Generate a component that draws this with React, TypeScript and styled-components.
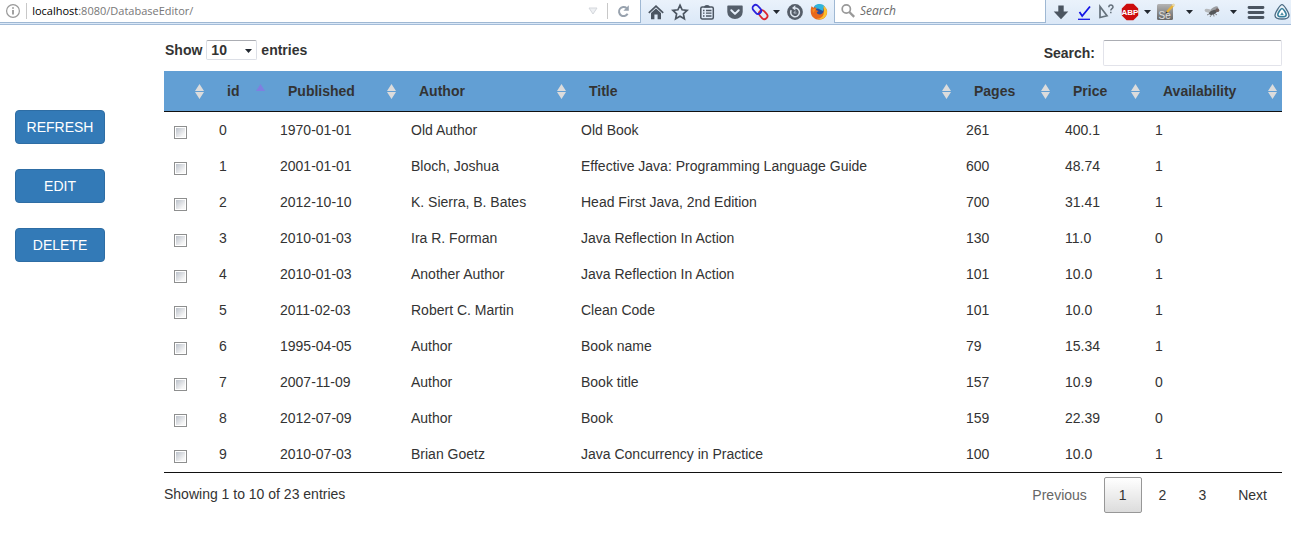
import React, { useState } from "react";
import styled, { createGlobalStyle } from "styled-components";

const GlobalStyle = createGlobalStyle`
  *, *::before, *::after { box-sizing: border-box; }
  body {
    margin: 0;
    background: #fff;
    color: #333;
    font: 14px/20px "Liberation Sans", Arial, Helvetica, sans-serif;
  }
  button, input, select { font: inherit; color: inherit; }
`;

/* ---------- browser toolbar ---------- */

const Toolbar = styled.header`
  display: flex;
  height: 25px;
  background: linear-gradient(#eaf2fb, #dbe8f7);
  border-bottom: 1px solid #a3bcd8;
  font: 12px/16px "Open Sans", "Noto Sans", sans-serif;
`;

const AddressBar = styled.div`
  flex: 1;
  display: flex;
  align-items: center;
  height: 23px;
  padding-left: 5px;
  background: #fff;
  border-right: 1px solid #9fb8d3;
  border-bottom: 1px solid #9fb8d3;
`;

const Divider = styled.span`
  width: 1px;
  height: 16px;
  background: #c8c8c8;
`;

const Url = styled.div`
  flex: 1;
  padding-left: 5px;
  font-size: 11px;
  color: #777;
  b { color: #000; font-weight: 400; }
`;

const SearchBar = styled.label`
  display: flex;
  align-items: center;
  gap: 5px;
  width: 212px;
  height: 23px;
  margin-left: 6px;
  padding-left: 6px;
  background: #fff;
  border: 1px solid #9fb8d3;
  border-top: 0;
`;

const SearchField = styled.input`
  flex: 1;
  min-width: 0;
  padding: 0;
  border: 0;
  outline: 0;
  background: none;
  &::placeholder { color: #6b6b6b; font-style: italic; opacity: 1; }
`;

const IconGroup = styled.div`
  display: flex;
  align-items: center;
  height: 23px;
  padding-left: 3px;
`;

const ToolButton = styled.button<{ $width?: number }>`
  display: flex;
  align-items: center;
  justify-content: center;
  flex: none;
  width: ${(p) => p.$width ?? 24}px;
  height: 22px;
  padding: 0;
  border: 0;
  background: none;
  color: #4b5561;
  svg { flex: none; display: block; }
`;

const Svg = ({ w = 18, children }: { w?: number; children: React.ReactNode }) => (
  <svg width={w} height="18" viewBox={`0 0 ${w} 18`} fill="none" aria-hidden="true">
    {children}
  </svg>
);

const InfoIcon = () => (
  <Svg>
    <circle cx="8" cy="9" r="6.4" stroke="#9a9a9a" strokeWidth="1.2" />
    <path d="M8 8v4.4M8 5.3v1.5" stroke="#8a8a8a" strokeWidth="1.6" />
  </Svg>
);

const DropIcon = () => (
  <Svg><path d="M5 6h8L9 12z" stroke="#d4d7dc" fill="#eef0f3" /></Svg>
);

const ReloadIcon = () => (
  <Svg>
    <path d="M12.6 11.800A4.600 4.600 0 1 1 11.600 6" stroke="#98a2ae" strokeWidth="2" />
    <path d="M13.800 3.200v5.600H8.400z" fill="#98a2ae" />
  </Svg>
);

const MagnifierIcon = () => (
  <Svg w={14}>
    <circle cx="5.3" cy="7" r="4.1" stroke="#999" strokeWidth="1.7" />
    <path d="M8.3 10l4.9 4.9" stroke="#999" strokeWidth="2.4" />
  </Svg>
);

const HomeIcon = () => (
  <Svg>
    <path d="M1.800 9.800L9 3.200l7.200 6.600" stroke="#4b5561" strokeWidth="1.700" />
    <path d="M4 10l5-4.400 5 4.400v6.200h-3.400v-4.600H7.400v4.600H4z" fill="#4b5561" />
  </Svg>
);

const StarIcon = () => (
  <Svg>
    <path d="M9 2.2l2.1 4.6 5 .6-3.7 3.4 1 5L9 13.3l-4.4 2.5 1-5-3.7-3.4 5-.6z" stroke="#4b5561" strokeWidth="1.7" />
  </Svg>
);

const ClipboardIcon = () => (
  <Svg>
    <rect x="2.800" y="4" width="12.500" height="12" rx="1.500" stroke="#4b5561" strokeWidth="1.500" />
    <path d="M6 4.500c0-3.300 6-3.300 6 0z" fill="#4b5561" />
    <path d="M5 7.500h1.500M8 7.500h5.500M5 10.200h1.500M8 10.200h5.500M5 13h1.500M8 13h5.500" stroke="#4b5561" strokeWidth="1.300" />
  </Svg>
);

const PocketIcon = () => (
  <Svg>
    <path d="M2.300 2.500h13.400c.6 0 1 .4 1 1V9a7.700 7 0 0 1-15.400 0V3.500c0-.6.4-1 1-1z" fill="#555f6b" />
    <path d="M5.300 7.300L9 10.900l3.700-3.600" stroke="#e6effa" strokeWidth="2" strokeLinecap="round" strokeLinejoin="round" />
  </Svg>
);

const LinkIcon = () => (
  <Svg>
    <rect x="7.400" y="8.600" width="9.600" height="6.200" rx="3.100" transform="rotate(48 12.200 11.700)" stroke="#dc2630" strokeWidth="1.800" />
    <rect x="1" y="3.300" width="9.800" height="6.200" rx="3.100" transform="rotate(48 5.900 6.400)" stroke="#2a22dc" strokeWidth="1.800" />
  </Svg>
);

const Caret = () => (
  <svg width="7" height="4" viewBox="0 0 7 4" aria-hidden="true"><path d="M0 0h7L3.5 4z" fill="#222830" /></svg>
);

const HistoryIcon = () => (
  <Svg>
    <circle cx="9" cy="9" r="7.900" fill="#555d68" />
    <path d="M5.200 7.200A4.400 4.400 0 1 0 9 4.900" stroke="#dce4ee" strokeWidth="1.500" />
    <path d="M9.300 2.300v5.200L6 4.900z" fill="#dce4ee" />
    <path d="M9.500 7.800L7.800 10h2.700" stroke="#b9c2cd" strokeWidth="1" />
  </Svg>
);

const FirefoxIcon = () => (
  <Svg>
    <circle cx="9.500" cy="8.500" r="7" fill="#2b4f9d" />
    <path d="M4.500 3C7 .3 12.500.5 14.500 3.200L13 8 8 5.500 4.500 6z" fill="#2fb4dc" />
    <path d="M1.500 3.200c.8.400 1.500.9 1.900 1.500 1.100-.4 2.300-.3 3.200.2L5.800 7l2.700 1.100-1.800 1.500c.7 2.200 3.700 2.400 5.500 1 2-1.600 2-4.100.8-6.200 2.400 1.200 3.200 3 3.200 3l.2-2.200c1.500 3.200.9 7-1.600 9.400-3.200 3-8.400 3-11.400 0C.3 11.600.2 7.200 1.500 3.200z" fill="#e8681c" />
    <path d="M13.500 2.500c3.200 2.200 4.300 6 3 9.300-1.600 3.900-6.100 5.500-9.700 4 3.400.1 6-1.700 6.700-4.300.8-2.700.4-6 0-9z" fill="#fbc02d" />
    <path d="M2.300 6.500c1-.9 2.300-1 3.200-.5L5 7.700 3 10z" fill="#f68b1f" />
  </Svg>
);

const DownloadIcon = () => (
  <Svg><path d="M6.300 2.500h5.400v6H16.300L9 16.300 1.700 8.500h4.600z" fill="#4b5561" /></Svg>
);

const CheckIcon = () => (
  <Svg>
    <path d="M4.500 9l2.700 4L15 3.500" stroke="#1414e6" strokeWidth="1.800" />
    <path d="M3 16.300h12" stroke="#1414e6" strokeWidth="1.300" />
  </Svg>
);

const HelpCursorIcon = () => (
  <Svg>
    <path d="M3 3.500v11l7-1.800z" stroke="#65717c" strokeWidth="1.700" />
    <path d="M11.800 4.300c.1-3 4.400-2.800 4.200-.2-.1 1.600-2.200 1.600-2.200 3.400M13.800 8.700v1.600" stroke="#65717c" strokeWidth="1.500" />
  </Svg>
);

const AbpIcon = () => (
  <Svg>
    <path d="M5.600.8h6.800l4.800 4.800v6.800l-4.800 4.800H5.600L.8 12.400V5.600z" fill="#cc0d0d" />
    <text x="9" y="11.800" textAnchor="middle" fontFamily="Liberation Sans" fontWeight="700" fontSize="8" fill="#fff">ABP</text>
  </Svg>
);

const SeleniumIcon = () => (
  <Svg w={20}>
    <defs>
      <linearGradient id="se" x1="0" y1="0" x2="0" y2="1">
        <stop stopColor="#b4b4b4" /><stop offset="1" stopColor="#666" />
      </linearGradient>
    </defs>
    <rect x="1" y="1" width="16" height="16" rx="1.5" fill="url(#se)" />
    <text x="2.500" y="15.500" fontFamily="Liberation Sans" fontSize="10" fill="#e0e0e0">Se</text>
    <path d="M11 9L17.500 2.200" stroke="#e8b23a" strokeWidth="2.400" />
    <path d="M16.700 3l1.800-1.900" stroke="#e7d9ad" strokeWidth="2.400" />
    <path d="M9.600 10.600l2.200-.8-1.400-1.400z" fill="#333" />
  </Svg>
);

const FlyIcon = () => (
  <Svg>
    <path d="M3 6.500l5 3M4 12l4-2M7 14l2-3M11 13.500l-.5-3M14 12l-3-2" stroke="#777" strokeWidth=".9" />
    <ellipse cx="6" cy="8" rx="4.500" ry="1.900" transform="rotate(14 6 8)" fill="#b6b9bc" />
    <ellipse cx="11.500" cy="6" rx="4" ry="1.900" transform="rotate(-28 11.500 6)" fill="#9c9fa3" />
    <ellipse cx="10" cy="9.300" rx="4.200" ry="2" transform="rotate(-22 10 9.300)" fill="#55575a" />
    <circle cx="14.400" cy="7.200" r="1.900" fill="#6f5f5c" />
  </Svg>
);

const MenuIcon = () => (
  <Svg><path d="M2 4.500h14M2 9.500h14M2 14.500h14" stroke="#4b5561" strokeWidth="2.800" strokeLinecap="round" /></Svg>
);

const TriangleLogo = () => (
  <Svg w={16}>
    <path d="M8 1.700C10 1.700 15 10 15 12.500S12.500 16 8 16s-7-1-7-3.500S6 1.700 8 1.700z" fill="#eef5fa" stroke="#4c6c84" strokeWidth="1.300" />
    <path d="M8 5.500c1.300 0 4.200 4.700 4.200 6.200S10.500 13.800 8 13.800s-4.200-.6-4.200-2.100S6.700 5.500 8 5.500z" fill="#fff" stroke="#39809c" strokeWidth="1.600" />
    <path d="M8 9.300l1.900 3H6.100z" fill="#4d8fa5" />
  </Svg>
);

/* ---------- page ---------- */

const Page = styled.main`
  display: flex;
  padding: 15px 9px 0 15px;
`;

const Actions = styled.nav`
  display: flex;
  flex-direction: column;
  gap: 25px;
  flex: none;
  width: 90px;
  margin-right: 59px;
  padding-top: 70px;
`;

const ActionButton = styled.button`
  height: 34px;
  padding: 0;
  border: 1px solid #2e6da4;
  border-radius: 4px;
  background: #337ab7;
  color: #fff;
  cursor: pointer;
`;

const Content = styled.section`
  flex: 1;
  min-width: 0;
`;

const Controls = styled.div`
  display: flex;
  justify-content: space-between;
  height: 31px;
  font-weight: 700;
`;

const LengthLabel = styled.label`
  display: flex;
  align-items: center;
  gap: 4px;
  height: 20px;
  padding-left: 1px;
`;

const SelectWrap = styled.span`
  position: relative;
  display: flex;
  svg {
    position: absolute;
    right: 5px;
    top: 9px;
    pointer-events: none;
  }
`;

const LengthSelect = styled.select`
  appearance: none;
  width: 51px;
  height: 20px;
  padding: 0 4px;
  border: 1px solid #dcdfe6;
  border-top-color: #abadb3;
  border-radius: 2px;
  background: #fff;
  line-height: 18px;
`;

const FilterLabel = styled.label`
  display: flex;
  align-items: center;
  gap: 8px;
  height: 26px;
`;

const FilterInput = styled.input`
  width: 179px;
  height: 26px;
  padding: 1px 4px;
  border: 1px solid #e2e3ea;
  border-top-color: #abadb3;
  border-radius: 2px;
  font-weight: 400;
`;

const Table = styled.table`
  width: 100%;
  table-layout: fixed;
  border-collapse: separate;
  border-spacing: 0;
  border-bottom: 1px solid #111;
`;

const Col = styled.col<{ $width?: number }>`
  width: ${(p) => (p.$width ? `${p.$width}px` : "auto")};
`;

const HeadCell = styled.th`
  height: 41px;
  padding: 0 5px 0 18px;
  border-bottom: 1px solid #111;
  background: #629fd4;
  text-align: left;
  cursor: pointer;
`;

const HeadInner = styled.div`
  display: flex;
  align-items: center;
  justify-content: space-between;
  height: 40px;
`;

const Cell = styled.td`
  height: 36px;
  padding: 8px 10px;
  white-space: nowrap;
`;

const Tick = styled.input`
  appearance: none;
  display: block;
  width: 13px;
  height: 13px;
  margin: 6px 0 1px;
  padding: 1px;
  border: 1px solid #8e8f8f;
  background: linear-gradient(135deg, #bcc2cb, #f6f6f6 80%) content-box;
  &:checked { background: #337ab7 content-box; }
`;

const Footer = styled.div`
  display: flex;
  justify-content: space-between;
  padding-top: 4px;
`;

const Info = styled.span`
  padding-top: 7px;
`;

const Pager = styled.nav`
  display: flex;
  gap: 2px;
`;

const PageButton = styled.button<{ $current?: boolean }>`
  height: 36px;
  padding: 0 14px;
  border: 1px solid ${(p) => (p.$current ? "#979797" : "transparent")};
  border-radius: 2px;
  background: ${(p) => (p.$current ? "linear-gradient(#fff, #dcdcdc)" : "none")};
  cursor: pointer;
  &:disabled { color: #666; cursor: default; }
`;

const SortBoth = () => (
  <svg width="9" height="15" viewBox="0 0 9 15" aria-hidden="true">
    <path d="M4.500 0L9 7H0zM0 8h9l-4.500 7z" fill="#dcdcdc" />
  </svg>
);

const SortAsc = () => (
  <svg width="9" height="15" viewBox="0 0 9 15" aria-hidden="true">
    <path d="M4.500 0L9 7H0z" fill="#7f7fe0" />
  </svg>
);

const columns: { label: string; width?: number }[] = [
  { label: "", width: 45 },
  { label: "id", width: 61 },
  { label: "Published", width: 131 },
  { label: "Author", width: 170 },
  { label: "Title" },
  { label: "Pages", width: 99 },
  { label: "Price", width: 90 },
  { label: "Availability", width: 137 },
];

const books = [
  ["0", "1970-01-01", "Old Author", "Old Book", "261", "400.1", "1"],
  ["1", "2001-01-01", "Bloch, Joshua", "Effective Java: Programming Language Guide", "600", "48.74", "1"],
  ["2", "2012-10-10", "K. Sierra, B. Bates", "Head First Java, 2nd Edition", "700", "31.41", "1"],
  ["3", "2010-01-03", "Ira R. Forman", "Java Reflection In Action", "130", "11.0", "0"],
  ["4", "2010-01-03", "Another Author", "Java Reflection In Action", "101", "10.0", "1"],
  ["5", "2011-02-03", "Robert C. Martin", "Clean Code", "101", "10.0", "1"],
  ["6", "1995-04-05", "Author", "Book name", "79", "15.34", "1"],
  ["7", "2007-11-09", "Author", "Book title", "157", "10.9", "0"],
  ["8", "2012-07-09", "Author", "Book", "159", "22.39", "0"],
  ["9", "2010-07-03", "Brian Goetz", "Java Concurrency in Practice", "100", "10.0", "1"],
];

export default function App() {
  const [page, setPage] = useState(1);
  return (
    <>
      <GlobalStyle />
      <Toolbar>
        <AddressBar>
          <InfoIcon />
          <span>&nbsp;</span>
          <Divider />
          <Url><b>localhost</b>:8080/DatabaseEditor/</Url>
          <ToolButton $width={28} aria-label="Show history"><DropIcon /></ToolButton>
          <Divider />
          <ToolButton $width={32} aria-label="Reload"><ReloadIcon /></ToolButton>
        </AddressBar>
        <IconGroup>
          <ToolButton aria-label="Home"><HomeIcon /></ToolButton>
          <ToolButton aria-label="Bookmark"><StarIcon /></ToolButton>
          <ToolButton $width={30} aria-label="Bookmarks list"><ClipboardIcon /></ToolButton>
          <ToolButton $width={26} aria-label="Pocket"><PocketIcon /></ToolButton>
          <ToolButton aria-label="Links"><LinkIcon /></ToolButton>
          <ToolButton $width={8} aria-label="Links menu"><Caret /></ToolButton>
          <ToolButton $width={30} aria-label="Restore"><HistoryIcon /></ToolButton>
          <ToolButton $width={18} aria-label="Firefox"><FirefoxIcon /></ToolButton>
        </IconGroup>
        <SearchBar>
          <MagnifierIcon />
          <SearchField placeholder="Search" aria-label="Web search" />
        </SearchBar>
        <IconGroup>
          <ToolButton aria-label="Downloads"><DownloadIcon /></ToolButton>
          <ToolButton $width={22} aria-label="Validate"><CheckIcon /></ToolButton>
          <ToolButton $width={22} aria-label="What is this"><HelpCursorIcon /></ToolButton>
          <ToolButton $width={26} aria-label="Ad blocking"><AbpIcon /></ToolButton>
          <ToolButton $width={8} aria-label="Ad blocking menu"><Caret /></ToolButton>
          <ToolButton $width={30} aria-label="Selenium"><SeleniumIcon /></ToolButton>
          <ToolButton $width={16} aria-label="Selenium menu"><Caret /></ToolButton>
          <ToolButton $width={30} aria-label="Debugger"><FlyIcon /></ToolButton>
          <ToolButton $width={12} aria-label="Debugger menu"><Caret /></ToolButton>
          <ToolButton $width={34} aria-label="Menu"><MenuIcon /></ToolButton>
          <ToolButton $width={18} aria-label="Add-on"><TriangleLogo /></ToolButton>
        </IconGroup>
      </Toolbar>

      <Page>
        <Actions>
          <ActionButton>REFRESH</ActionButton>
          <ActionButton>EDIT</ActionButton>
          <ActionButton>DELETE</ActionButton>
        </Actions>
        <Content>
          <Controls>
            <LengthLabel>
              Show
              <SelectWrap>
                <LengthSelect defaultValue="10">
                  <option>10</option>
                  <option>25</option>
                  <option>50</option>
                </LengthSelect>
                <Caret />
              </SelectWrap>
              entries
            </LengthLabel>
            <FilterLabel>
              Search:
              <FilterInput type="search" />
            </FilterLabel>
          </Controls>
          <Table>
            <colgroup>
              {columns.map((c, i) => <Col key={i} $width={c.width} />)}
            </colgroup>
            <thead>
              <tr>
                {columns.map((c) => (
                  <HeadCell key={c.label} scope="col">
                    <HeadInner>
                      <span>{c.label}</span>
                      {c.label === "id" ? <SortAsc /> : <SortBoth />}
                    </HeadInner>
                  </HeadCell>
                ))}
              </tr>
            </thead>
            <tbody>
              {books.map((book) => (
                <tr key={book[0]}>
                  <Cell><Tick type="checkbox" aria-label={`Select ${book[3]}`} /></Cell>
                  {book.map((value, i) => <Cell key={i}>{value}</Cell>)}
                </tr>
              ))}
            </tbody>
          </Table>
          <Footer>
            <Info>Showing 1 to 10 of 23 entries</Info>
            <Pager aria-label="Pages">
              <PageButton disabled={page === 1} onClick={() => setPage(page - 1)}>Previous</PageButton>
              {[1, 2, 3].map((n) => (
                <PageButton key={n} $current={n === page} onClick={() => setPage(n)}>{n}</PageButton>
              ))}
              <PageButton disabled={page === 3} onClick={() => setPage(page + 1)}>Next</PageButton>
            </Pager>
          </Footer>
        </Content>
      </Page>
    </>
  );
}
